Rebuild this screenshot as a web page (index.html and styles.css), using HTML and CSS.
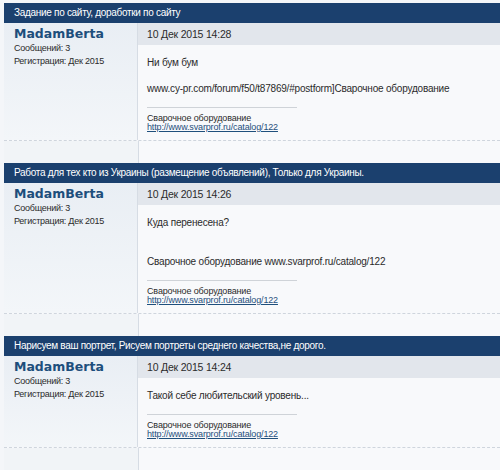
FILE: index.html
```html
<!DOCTYPE html>
<html>
<head>
    <title>Сообщения пользователя MadamBerta</title>
    <link rel="stylesheet" href="styles.css">
</head>
<body>
    <div class="posts">
        <div class="thead">Задание по сайту, доработки по сайту</div>
        <div class="post">
            <div class="userinfo">
                <div class="username">MadamBerta</div>
                <div>Сообщений: 3</div>
                <div>Регистрация: Дек 2015</div>
            </div>
            <div class="postdate">10 Дек 2015 14:28</div>
            <div class="postbody">
                <div class="message">Ни бум бум<br><br>www.cy-pr.com/forum/f50/t87869/#postform]Сварочное оборудование</div>
                <div class="signature">
                    Сварочное оборудование<br>
                    <a href="#">http://www.svarprof.ru/catalog/122</a>
                </div>
            </div>
        </div>
        <div class="postfoot"><div class="footleft"></div><div></div></div>

        <div class="thead">Работа для тех кто из Украины (размещение объявлений), Только для Украины.</div>
        <div class="post">
            <div class="userinfo">
                <div class="username">MadamBerta</div>
                <div>Сообщений: 3</div>
                <div>Регистрация: Дек 2015</div>
            </div>
            <div class="postdate">10 Дек 2015 14:26</div>
            <div class="postbody">
                <div class="message">Куда перенесена?<br><br><br>Сварочное оборудование www.svarprof.ru/catalog/122</div>
                <div class="signature">
                    Сварочное оборудование<br>
                    <a href="#">http://www.svarprof.ru/catalog/122</a>
                </div>
            </div>
        </div>
        <div class="postfoot"><div class="footleft"></div><div></div></div>

        <div class="thead">Нарисуем ваш портрет, Рисуем портреты среднего качества,не дорого.</div>
        <div class="post">
            <div class="userinfo">
                <div class="username">MadamBerta</div>
                <div>Сообщений: 3</div>
                <div>Регистрация: Дек 2015</div>
            </div>
            <div class="postdate">10 Дек 2015 14:24</div>
            <div class="postbody">
                <div class="message">Такой себе любительский уровень...</div>
                <div class="signature">
                    Сварочное оборудование<br>
                    <a href="#">http://www.svarprof.ru/catalog/122</a>
                </div>
            </div>
        </div>
        <div class="postfoot last"><div class="footleft"></div><div></div></div>
    </div>
</body>
</html>
```

FILE: styles.css
```css
body { margin: 0; background: #f4f6f9; font-family: "Liberation Sans", Arial, sans-serif; font-size: 10px; letter-spacing: -0.2px; color: #2b2b2b; }
.posts { margin: 3px 0 0 4px; background: #f8f9fb; }
.thead {
    background: #1b406e;
    color: #fff;
    height: 20px;
    line-height: 20px;
    padding-left: 10px;
    font-size: 10px;
    letter-spacing: -0.3px;
}
.post { display: grid; grid-template-columns: 134px 1fr; }
.userinfo {
    grid-row: 1 / 3;
    padding: 3px 10px 0;
    font-size: 9px;
    letter-spacing: -0.25px;
    line-height: 13px;
    background: linear-gradient(to bottom, #e9eef4, #f3f6f9);
    border-right: 1px solid #d6dce4;
}
.username { font-family: "DejaVu Sans", Verdana, sans-serif; font-weight: bold; font-size: 12.5px; letter-spacing: 0; line-height: 16px; color: #1d4e7c; }
.postdate { background: #e2e6ec; height: 22px; line-height: 22px; padding-left: 9px; font-size: 10.5px; }
.postbody { padding: 11px 9px 8px; line-height: 13px; }
.signature {
    margin-top: 12px;
    width: 150px;
    border-top: 1px solid #cfd3d8;
    padding-top: 6px;
    font-size: 9px;
    letter-spacing: -0.15px;
    line-height: 9px;
    white-space: nowrap;
}
.signature a { color: #1f4f7c; }
.postfoot { display: flex; height: 22px; border-top: 1px dashed #cfd5dd; }
.postfoot.last { border-bottom: 1px solid #d6dce4; }
.footleft { width: 134px; border-right: 1px solid #d6dce4; background: #f1f4f7; }
```
